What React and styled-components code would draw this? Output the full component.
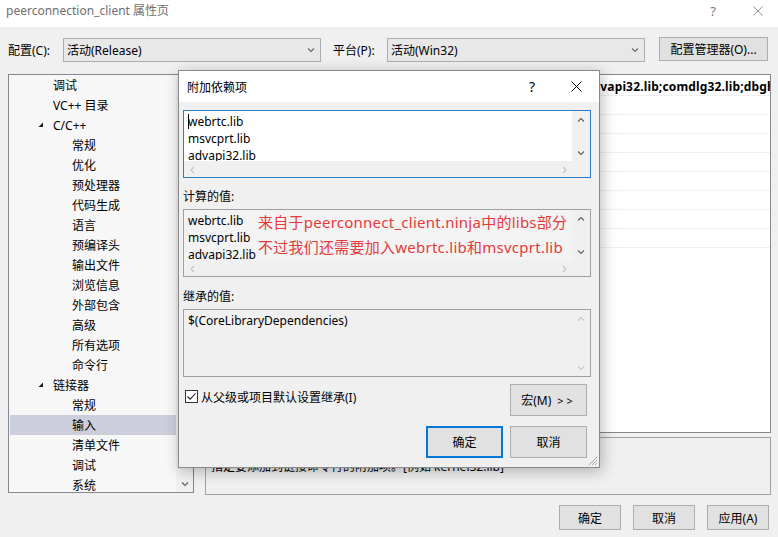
import React from "react";
import styled, { createGlobalStyle } from "styled-components";

const GlobalStyle = createGlobalStyle`
  html, body {
    margin: 0;
    padding: 0;
    background: #f0f0f0;
  }
  body {
    font-family: "Noto Sans", "Noto Sans CJK SC", sans-serif;
    font-size: 12px;
    color: #000;
  }
`;

// ***************************************************

const Window = styled.div`
  position: relative;
  width: 778px;
  height: 537px;
  overflow: hidden;
  background: #f0f0f0;
`;

const TitleBar = styled.div`
  height: 27px;
  background: #ffffff;
  display: flex;
  align-items: flex-start;
  justify-content: space-between;
`;

const TitleText = styled.div`
  padding: 2px 0 0 6px;
  line-height: 17px;
  color: #6f6f6f;
`;

const WinControls = styled.div`
  display: flex;
  align-items: center;
  gap: 37px;
  padding: 4px 15px 0 0;
  color: #7a7a7a;
  font-size: 13px;
  line-height: 14px;
`;

const ConfigRow = styled.div`
  margin-top: 11px;
  height: 24px;
  display: flex;
  align-items: center;
  padding-left: 8px;
`;

const FieldLabel = styled.div`
  width: ${(p) => p.$width}px;
  margin-left: ${(p) => p.$gap || 0}px;
  white-space: nowrap;
`;

const Combo = styled.div`
  width: 258px;
  height: 24px;
  box-sizing: border-box;
  border: 1px solid #adadad;
  background: #e8e8e8;
  display: flex;
  align-items: center;
  justify-content: space-between;
  padding: 0 5px 0 3px;
`;

const Button = styled.div`
  width: ${(p) => p.$width}px;
  height: ${(p) => p.$height}px;
  box-sizing: border-box;
  border: ${(p) => (p.$default ? "2px solid #0078d7" : "1px solid #adadad")};
  background: #e1e1e1;
  display: flex;
  align-items: center;
  justify-content: center;
  margin-left: ${(p) => p.$gap || 0}px;
  margin-top: ${(p) => p.$shift || 0}px;
  white-space: nowrap;
`;

const Body = styled.div`
  margin-top: 12px;
  display: flex;
  padding-left: 8px;
  gap: 11px;
`;

const Tree = styled.div`
  width: 186px;
  height: 419px;
  box-sizing: border-box;
  border: 1px solid #828790;
  background: #f7f7f7;
  display: flex;
  overflow: hidden;
`;

const TreeList = styled.div`
  width: 166px;
  padding-left: 1px;
  overflow: hidden;
`;

const TreeItem = styled.div`
  height: 20px;
  display: flex;
  align-items: center;
  padding-left: ${(p) => (p.$level === 2 ? 47 : 28)}px;
  background: ${(p) => (p.$selected ? "#cccedb" : "transparent")};
  white-space: nowrap;
`;

const Expander = styled.span`
  width: 15px;
  display: flex;
  align-items: center;
`;

const TreeScroll = styled.div`
  width: 17px;
  background: #f0f0f0;
  display: flex;
  flex-direction: column;
  justify-content: space-between;
  align-items: center;
`;

const ScrollBtn = styled.div`
  width: 17px;
  height: 17px;
  display: flex;
  align-items: center;
  justify-content: center;
`;

const RightCol = styled.div`
  width: 566px;
  display: flex;
  flex-direction: column;
  gap: 4px;
`;

const PropGrid = styled.div`
  height: 359px;
  box-sizing: border-box;
  border: 1px solid #828790;
  background: #ffffff;
  padding-top: 2px;
  overflow: hidden;
`;

const PropRow = styled.div`
  height: 19px;
  box-sizing: border-box;
  border-bottom: 1px solid #f0f0f0;
  display: flex;
  align-items: center;
  white-space: nowrap;
`;

const PropName = styled.div`
  width: 238px;
  flex: none;
  padding-left: 20px;
  box-sizing: border-box;
`;

const PropValue = styled.div`
  font-weight: ${(p) => (p.$bold ? 700 : 400)};
  letter-spacing: ${(p) => (p.$bold ? "0.15px" : "0")};
  padding-left: 4px;
`;

const DescPanel = styled.div`
  height: 58px;
  box-sizing: border-box;
  border: 1px solid #a0a0a0;
  padding: 3px 5px;
  line-height: 17px;
`;

const DescTitle = styled.div`
  font-weight: 700;
`;

const Footer = styled.div`
  margin-top: 10px;
  display: flex;
  justify-content: flex-end;
  gap: 12px;
  padding-right: 9px;
`;

// dialog ***************************************************

const Dialog = styled.div`
  position: absolute;
  left: 178px;
  top: 70px;
  width: 422px;
  height: 398px;
  box-sizing: border-box;
  border: 1px solid #8a8a8a;
  background: #f0f0f0;
  box-shadow: 2px 3px 14px rgba(0, 0, 0, 0.28);
  display: flex;
  flex-direction: column;
`;

const DialogTitle = styled.div`
  height: 31px;
  background: #ffffff;
  display: flex;
  align-items: center;
  justify-content: space-between;
  padding: 0 17px 0 8px;
`;

const DialogControls = styled.div`
  display: flex;
  align-items: center;
  gap: 36px;
  font-size: 14px;
`;

const DialogBody = styled.div`
  padding: 8px 8px 0 4px;
  display: flex;
  flex-direction: column;
`;

const SectionLabel = styled.div`
  padding-top: ${(p) => p.$top || 10}px;
  line-height: 17px;
  margin-bottom: 4px;
`;

const Box = styled.div`
  width: 408px;
  height: 68px;
  box-sizing: border-box;
  border: 1px solid ${(p) => (p.$focused ? "#2f7dc6" : "#a0a0a0")};
  background: #f0f0f0;
  display: grid;
  grid-template-columns: minmax(0, 1fr) 18px;
  grid-template-rows: ${(p) => (p.$hscroll ? "minmax(0, 1fr) 16px" : "minmax(0, 1fr)")};
`;

const BoxContent = styled.div`
  grid-column: 1;
  grid-row: 1;
  position: relative;
  background: ${(p) => p.$bg};
  padding: 2px 4px 0;
  line-height: 17px;
  overflow: hidden;
  white-space: nowrap;
`;

const Caret = styled.span`
  position: absolute;
  left: 4px;
  top: 3px;
  width: 1px;
  height: 15px;
  background: #000;
`;

const VScroll = styled.div`
  grid-column: 2;
  grid-row: ${(p) => (p.$full ? "1 / -1" : "1")};
  display: flex;
  flex-direction: column;
  justify-content: space-between;
`;

const HScroll = styled.div`
  grid-column: 1;
  grid-row: 2;
  display: flex;
  justify-content: space-between;
`;

const Annotation = styled.div`
  position: absolute;
  left: 74px;
  top: 0;
  color: #e53a3c;
  font-size: 15px;
  letter-spacing: 0.25px;
  line-height: 25px;
`;

const CheckRow = styled.div`
  margin-top: 7px;
  display: flex;
  justify-content: space-between;
  padding-right: 4px;
`;

const CheckLabel = styled.div`
  display: flex;
  align-items: center;
  gap: 3px;
  margin: 5px 0 0 2px;
  height: 15px;
`;

const CheckBox = styled.span`
  width: 13px;
  height: 13px;
  box-sizing: border-box;
  border: 1px solid #333333;
  background: #ffffff;
  display: flex;
  align-items: center;
  justify-content: center;
`;

const ActionRow = styled.div`
  margin-top: 10px;
  display: flex;
  justify-content: flex-end;
  gap: 7px;
  padding-right: 4px;
`;

const Arrows = styled.span`
  font-size: 11px;
  letter-spacing: 3px;
  margin-left: 6px;
`;

const Grip = styled.div`
  position: absolute;
  right: 1px;
  bottom: 1px;
  display: flex;
`;

// ***************************************************

const Chevron = ({ dir = "down", color = "#606060" }) => {
  const paths = {
    down: "M1 2.5 L4 5.5 L7 2.5",
    up: "M1 5.5 L4 2.5 L7 5.5",
    left: "M5 1 L2 4 L5 7",
    right: "M3 1 L6 4 L3 7",
  };
  return (
    <svg width="8" height="8" viewBox="0 0 8 8">
      <path d={paths[dir]} fill="none" stroke={color} strokeWidth="1.1" />
    </svg>
  );
};

const CloseIcon = ({ color = "#000", size = 11 }) => (
  <svg width={size} height={size} viewBox="0 0 11 11">
    <path d="M0.5 0.5 L10.5 10.5 M10.5 0.5 L0.5 10.5" stroke={color} strokeWidth="1" />
  </svg>
);

const ExpandedMark = () => (
  <svg width="6" height="6" viewBox="0 0 6 6">
    <path d="M5 0.5 L5 5 L0.5 5 Z" fill="#1e1e1e" />
  </svg>
);

const treeItems = [
  { label: "调试", level: 1 },
  { label: "VC++ 目录", level: 1 },
  { label: "C/C++", level: 1, open: true },
  { label: "常规", level: 2 },
  { label: "优化", level: 2 },
  { label: "预处理器", level: 2 },
  { label: "代码生成", level: 2 },
  { label: "语言", level: 2 },
  { label: "预编译头", level: 2 },
  { label: "输出文件", level: 2 },
  { label: "浏览信息", level: 2 },
  { label: "外部包含", level: 2 },
  { label: "高级", level: 2 },
  { label: "所有选项", level: 2 },
  { label: "命令行", level: 2 },
  { label: "链接器", level: 1, open: true },
  { label: "常规", level: 2 },
  { label: "输入", level: 2, selected: true },
  { label: "清单文件", level: 2 },
  { label: "调试", level: 2 },
  { label: "系统", level: 2 },
];

const props = [
  ["附加依赖项", "webrtc.lib;msvcprt.lib;advapi32.lib;comdlg32.lib;dbghelp.lib;dnsapi.lib", true],
  ["忽略所有默认库", ""],
  ["忽略特定默认库", ""],
  ["模块定义文件", ""],
  ["将模块添加到程序集", ""],
  ["嵌入托管资源文件", ""],
  ["强制符号引用", ""],
  ["延迟加载的 DLL", ""],
  ["程序集链接资源", ""],
];

const libs = ["webrtc.lib", "msvcprt.lib", "advapi32.lib"];

const App = () => {
  return (
    <>
      <GlobalStyle />
      <Window>
        <TitleBar>
          <TitleText>peerconnection_client 属性页</TitleText>
          <WinControls>
            <span>?</span>
            <CloseIcon color="#8a8a8a" size={10} />
          </WinControls>
        </TitleBar>

        <ConfigRow>
          <FieldLabel $width={55}>配置(C):</FieldLabel>
          <Combo>
            <span>活动(Release)</span>
            <Chevron dir="down" color="#666" />
          </Combo>
          <FieldLabel $width={54} $gap={12}>平台(P):</FieldLabel>
          <Combo>
            <span>活动(Win32)</span>
            <Chevron dir="down" color="#666" />
          </Combo>
          <Button $width={109} $height={24} $gap={14} $shift={-2}>
            配置管理器(O)...
          </Button>
        </ConfigRow>

        <Body>
          <Tree>
            <TreeList>
              {treeItems.map((item, i) => (
                <TreeItem key={i} $level={item.level} $selected={item.selected}>
                  <Expander>{item.open && <ExpandedMark />}</Expander>
                  {item.label}
                </TreeItem>
              ))}
            </TreeList>
            <TreeScroll>
              <ScrollBtn>
                <Chevron dir="up" />
              </ScrollBtn>
              <ScrollBtn>
                <Chevron dir="down" />
              </ScrollBtn>
            </TreeScroll>
          </Tree>

          <RightCol>
            <PropGrid>
              {props.map(([name, value, bold], i) => (
                <PropRow key={i}>
                  <PropName>{name}</PropName>
                  <PropValue $bold={bold}>{value}</PropValue>
                </PropRow>
              ))}
            </PropGrid>
            <DescPanel>
              <DescTitle>附加依赖项</DescTitle>
              <div>指定要添加到链接命令行的附加项。[例如 kernel32.lib]</div>
            </DescPanel>
          </RightCol>
        </Body>

        <Footer>
          <Button $width={62} $height={25}>确定</Button>
          <Button $width={62} $height={25}>取消</Button>
          <Button $width={62} $height={25}>应用(A)</Button>
        </Footer>

        <Dialog>
          <DialogTitle>
            <span>附加依赖项</span>
            <DialogControls>
              <span>?</span>
              <CloseIcon />
            </DialogControls>
          </DialogTitle>

          <DialogBody>
            <Box $focused $hscroll>
              <BoxContent $bg="#ffffff">
                <Caret />
                {libs.map((l) => (
                  <div key={l}>{l}</div>
                ))}
              </BoxContent>
              <VScroll>
                <ScrollBtn>
                  <Chevron dir="up" />
                </ScrollBtn>
                <ScrollBtn>
                  <Chevron dir="down" />
                </ScrollBtn>
              </VScroll>
              <HScroll>
                <ScrollBtn>
                  <Chevron dir="left" color="#c2c2c2" />
                </ScrollBtn>
                <ScrollBtn>
                  <Chevron dir="right" color="#c2c2c2" />
                </ScrollBtn>
              </HScroll>
            </Box>

            <SectionLabel>计算的值:</SectionLabel>
            <Box $hscroll>
              <BoxContent $bg="#f3f3f3">
                {libs.map((l) => (
                  <div key={l}>{l}</div>
                ))}
                <Annotation>
                  <div>来自于peerconnect_client.ninja中的libs部分</div>
                  <div>不过我们还需要加入webrtc.lib和msvcprt.lib</div>
                </Annotation>
              </BoxContent>
              <VScroll>
                <ScrollBtn>
                  <Chevron dir="up" />
                </ScrollBtn>
                <ScrollBtn>
                  <Chevron dir="down" />
                </ScrollBtn>
              </VScroll>
              <HScroll>
                <ScrollBtn>
                  <Chevron dir="left" color="#c2c2c2" />
                </ScrollBtn>
                <ScrollBtn>
                  <Chevron dir="right" color="#c2c2c2" />
                </ScrollBtn>
              </HScroll>
            </Box>

            <SectionLabel $top={11}>继承的值:</SectionLabel>
            <Box>
              <BoxContent $bg="#f0f0f0">
                <div>$(CoreLibraryDependencies)</div>
              </BoxContent>
              <VScroll $full>
                <ScrollBtn>
                  <Chevron dir="up" color="#c8c8c8" />
                </ScrollBtn>
                <ScrollBtn>
                  <Chevron dir="down" color="#c8c8c8" />
                </ScrollBtn>
              </VScroll>
            </Box>

            <CheckRow>
              <CheckLabel>
                <CheckBox>
                  <svg width="11" height="11" viewBox="0 0 11 11">
                    <path d="M1.5 5.5 L4.2 8.2 L9.5 2.5" fill="none" stroke="#222" strokeWidth="1.1" />
                  </svg>
                </CheckBox>
                <span>从父级或项目默认设置继承(I)</span>
              </CheckLabel>
              <Button $width={77} $height={32}>
                宏(M)<Arrows>&gt;&gt;</Arrows>
              </Button>
            </CheckRow>

            <ActionRow>
              <Button $width={77} $height={32} $default>确定</Button>
              <Button $width={77} $height={32}>取消</Button>
            </ActionRow>
          </DialogBody>

          <Grip>
            <svg width="11" height="11" viewBox="0 0 11 11">
              <path d="M10 2 L2 10 M10 5 L5 10 M10 8 L8 10" stroke="#a8a8a8" strokeWidth="1" />
            </svg>
          </Grip>
        </Dialog>
      </Window>
    </>
  );
};

export default App;
